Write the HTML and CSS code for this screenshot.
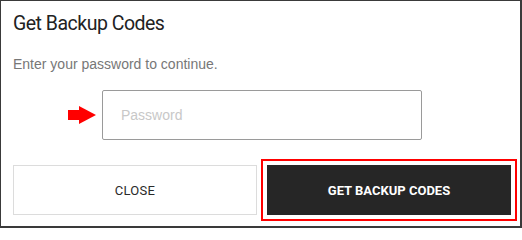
FILE: index.html
```html
<!DOCTYPE html>
<html lang="en">
<head>
<meta charset="utf-8">
<title>Get Backup Codes</title>
<link rel="stylesheet" href="styles.css">
</head>
<body>
<div class="dialog">
  <h1 class="title">Get Backup Codes</h1>
  <p class="subtitle">Enter your password to continue.</p>
  <div class="input-row">
    <svg class="arrow" width="28" height="18" viewBox="0 0 28 18" aria-hidden="true">
      <rect x="0" y="4" width="12" height="10" fill="#f00"/>
      <polygon points="11,0 28,9 11,18" fill="#f00"/>
    </svg>
    <input class="password" type="password" placeholder="Password">
  </div>
  <div class="actions">
    <button class="btn btn-close" type="button">CLOSE</button>
    <div class="highlight">
      <button class="btn btn-primary" type="button">GET BACKUP CODES</button>
    </div>
  </div>
</div>
</body>
</html>
```

FILE: styles.css
```css
* { box-sizing: border-box; }
html, body { margin: 0; padding: 0; background: #fff; }
.dialog {
  width: 522px;
  height: 228px;
  border: 1px solid #3a3a3a;
  border-right-width: 2px;
  border-bottom-width: 2px;
  padding: 11px 0 0 12px;
  background: #fff;
}
.title {
  margin: 0;
  font-family: Roboto, sans-serif;
  font-weight: 400;
  font-size: 19.5px;
  letter-spacing: -0.5px;
  line-height: 24px;
  color: #222;
}
.subtitle {
  margin: 20px 0 0;
  font-family: "Liberation Sans", Arial, sans-serif;
  font-size: 14px;
  line-height: 16px;
  color: #777;
}
.input-row {
  display: flex;
  align-items: center;
  gap: 6px;
  margin-top: 18px;
  padding-left: 55px;
}
.arrow { display: block; flex: none; }
.password {
  width: 320px;
  height: 50px;
  border: 1px solid #9a9a9a;
  border-radius: 2px;
  padding: 0 0 0 18px;
  font-family: "Liberation Sans", Arial, sans-serif;
  font-size: 14px;
  color: #333;
  outline: none;
  background: #fff;
}
.password::placeholder { color: #c8c8c8; }
.actions {
  display: flex;
  align-items: center;
  gap: 4px;
  margin-top: 19px;
}
.btn {
  width: 244px;
  height: 50px;
  margin: 0;
  padding: 0;
  font-family: Roboto, sans-serif;
  font-size: 13px;
  cursor: pointer;
}
.btn-close {
  background: #fff;
  border: 1px solid #dcdcdc;
  color: #2a2a2a;
  font-weight: 400;
  letter-spacing: 0.3px;
}
.highlight {
  border: 2px solid #f00;
  padding: 4px;
}
.btn-primary {
  display: block;
  background: #262626;
  border: none;
  color: #fff;
  font-weight: 700;
}
```
